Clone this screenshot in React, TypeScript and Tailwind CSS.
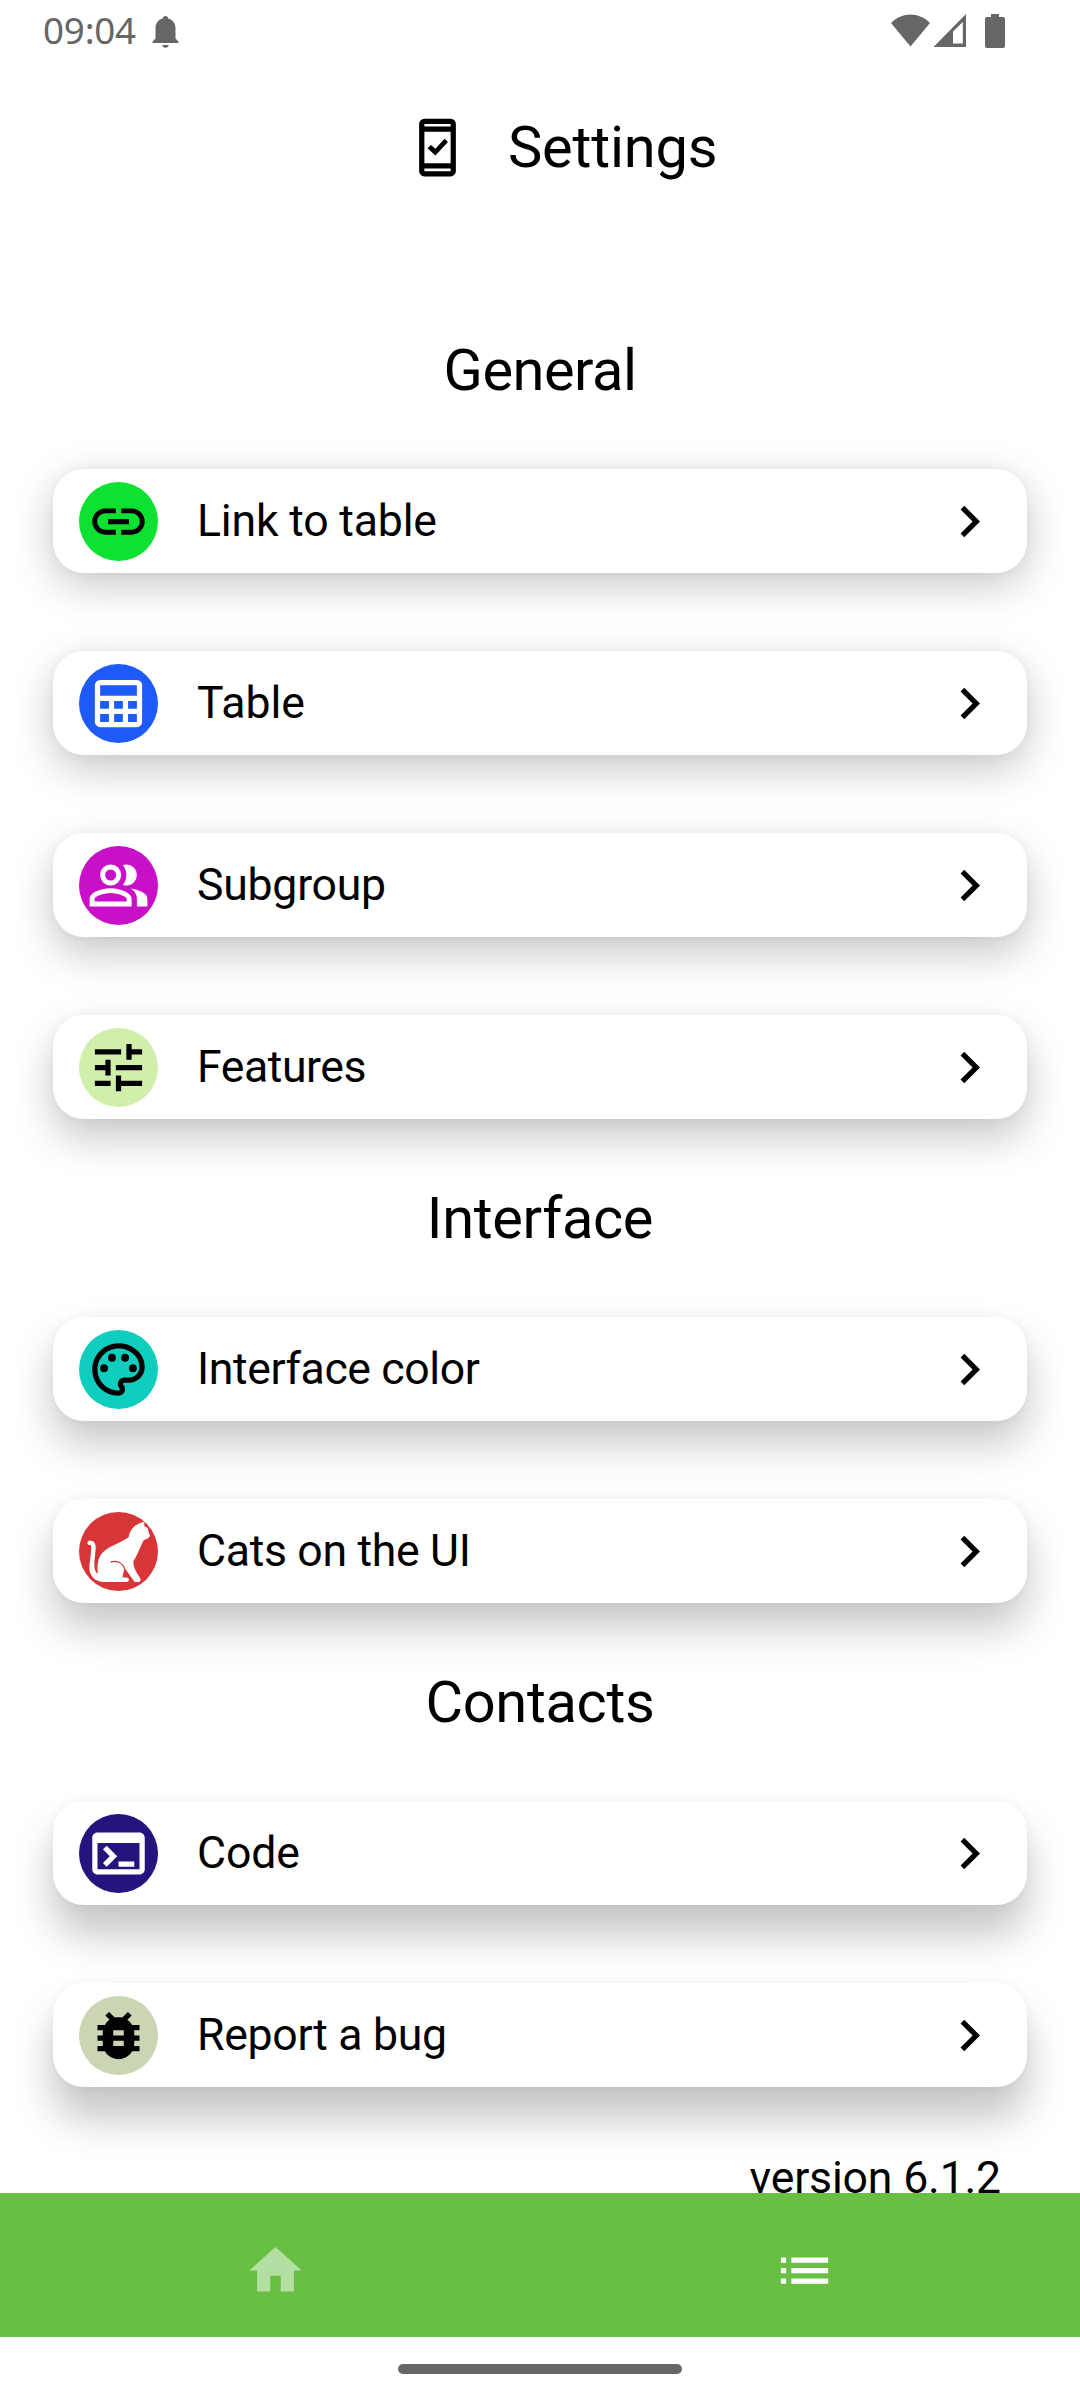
import React from "react";

type IconDef = { paths: string[]; evenOdd?: boolean };

const icons: Record<string, IconDef> = {
  link: {
    paths: [
      "M3.9 12c0-1.71 1.39-3.1 3.1-3.1h4V7H7c-2.76 0-5 2.24-5 5s2.24 5 5 5h4v-1.9H7c-1.71 0-3.1-1.39-3.1-3.1zM8 13h8v-2H8v2zm9-6h-4v1.9h4c1.71 0 3.1 1.39 3.1 3.1s-1.39 3.1-3.1 3.1h-4V17h4c2.76 0 5-2.24 5-5s-2.24-5-5-5z",
    ],
  },
  table: {
    evenOdd: true,
    paths: [
      "M5 3h14a2 2 0 0 1 2 2v14a2 2 0 0 1-2 2H5a2 2 0 0 1-2-2V5a2 2 0 0 1 2-2zM5 5v4h14V5zM5 11v3h3.35v-3zM10.33 11v3h3.34v-3zM15.65 11v3H19v-3zM5 16v3h3.35v-3zM10.33 16v3h3.34v-3zM15.65 16v3H19v-3z",
    ],
  },
  people: {
    evenOdd: true,
    paths: [
      "M9 13c2.67 0 8 1.34 8 4v3H1v-3c0-2.66 5.33-4 8-4zM9 14.9c-2.97 0-6.1 1.46-6.1 2.1v1.1h12.2V17c0-.64-3.13-2.1-6.1-2.1z",
      "M9 4a4 4 0 1 1 0 8a4 4 0 0 1 0-8zM9 5.9a2.1 2.1 0 1 0 0 4.2a2.1 2.1 0 0 0 0-4.2z",
      "M15 4a4 4 0 0 1 0 8c-.47 0-.92-.08-1.33-.23C14.5 10.74 15 9.43 15 8s-.5-2.74-1.33-3.77C14.08 4.08 14.53 4 15 4z",
      "M16.67 13.13C18.04 14.06 19 15.32 19 17v3h4v-3c0-2.18-3.57-3.47-6.33-3.87z",
    ],
  },
  tune: {
    paths: [
      "M3 17v2h6v-2H3zM3 5v2h10V5H3zm10 16v-2h8v-2h-8v-2h-2v6h2zM7 9v2H3v2h4v2h2V9H7zm14 4v-2H11v2h10zm-6-4h2V7h4V5h-4V3h-2v6z",
    ],
  },
  palette: {
    paths: [
      "M12 22C6.49 22 2 17.51 2 12S6.49 2 12 2s10 4.04 10 9c0 3.31-2.69 6-6 6h-1.77c-.28 0-.5.22-.5.5 0 .12.05.23.13.33.41.47.64 1.06.64 1.67A2.5 2.5 0 0 1 12 22zm0-18c-4.41 0-8 3.59-8 8s3.59 8 8 8c.28 0 .5-.22.5-.5a.54.54 0 0 0-.14-.35c-.41-.46-.63-1.05-.63-1.65a2.5 2.5 0 0 1 2.5-2.5H16c2.21 0 4-1.79 4-4 0-3.86-3.59-7-8-7z",
      "M5 11.5a1.5 1.5 0 1 1 3 0a1.5 1.5 0 1 1-3 0zM8 7.5a1.5 1.5 0 1 1 3 0a1.5 1.5 0 1 1-3 0zM13 7.5a1.5 1.5 0 1 1 3 0a1.5 1.5 0 1 1-3 0zM16 11.5a1.5 1.5 0 1 1 3 0a1.5 1.5 0 1 1-3 0z",
    ],
  },
  terminal: {
    paths: [
      "M20 4H4c-1.11 0-2 .9-2 2v12c0 1.1.89 2 2 2h16c1.1 0 2-.9 2-2V6c0-1.1-.89-2-2-2zm0 14H4V8h16v10zm-2-1h-6v-2h6v2zM7.5 17l-1.41-1.41L8.67 13l-2.59-2.59L7.5 9l4 4-4 4z",
    ],
  },
  bug: {
    paths: [
      "M20 8h-2.81a5.985 5.985 0 0 0-1.82-1.96L17 4.41 15.59 3l-2.17 2.17C12.96 5.06 12.49 5 12 5s-.96.06-1.41.17L8.41 3 7 4.41l1.62 1.63C7.88 6.55 7.26 7.22 6.81 8H4v2h2.09c-.05.33-.09.66-.09 1v1H4v2h2v1c0 .34.04.67.09 1H4v2h2.81c1.04 1.79 2.97 3 5.19 3s4.15-1.21 5.19-3H20v-2h-2.09c.05-.33.09-.66.09-1v-1h2v-2h-2v-1c0-.34-.04-.67-.09-1H20V8zm-6 8h-4v-2h4v2zm0-4h-4v-2h4v2z",
    ],
  },
  phone: {
    evenOdd: true,
    paths: [
      "M7 1h10a2 2 0 0 1 2 2v18a2 2 0 0 1-2 2H7a2 2 0 0 1-2-2V3a2 2 0 0 1 2-2zM7 3v1h10V3zM7 6v12h10V6zM7 20v1h10v-1z",
      "M8.2 12.3l1.3-1.3 1.7 1.5 3.5-3.85 1.3 1.3-4.8 5.05z",
    ],
  },
  chevron: { paths: ["M10 6 8.59 7.41 13.17 12l-4.58 4.59L10 18l6-6z"] },
  home: { paths: ["M10 20v-6h4v6h5v-8h3L12 3 2 12h3v8z"] },
  list: { paths: ["M3 13h2v-2H3v2zm0 4h2v-2H3v2zm0-8h2V7H3v2zm4 4h14v-2H7v2zm0 4h14v-2H7v2zM7 7v2h14V7H7z"] },
};

function Icon({ name, className = "" }: { name: string; className?: string }) {
  const icon = icons[name];
  return (
    <svg viewBox="0 0 24 24" fill="currentColor" className={`size-[63px] shrink-0 ${className}`}>
      {icon.paths.map((d) => (
        <path key={d} d={d} fillRule={icon.evenOdd ? "evenodd" : "nonzero"} />
      ))}
    </svg>
  );
}

function CatIcon() {
  return (
    <svg viewBox="0 0 237 237" className="size-[79px] shrink-0">
      <path
        fill="#fff"
        d="M196 29L196 43L206 48L209 61L213 72L207 79L194 85C184 104 175 131 163 148C163 168 174 183 183 198C187 204 183 210 177 210L167 210L137 168C133 175 134 185 130 196L145 197C152 199 151 209 144 210L74 210C49 208 32 194 31 167C32 145 38 119 36 100L27 98C22 92 28 84 36 86C47 87 51 98 50 109C49 130 44 153 47 169C48 177 52 183 56 186C54 153 57 132 77 116C96 101 128 91 149 76C153 50 170 35 196 29Z"
      />
      <path d="M95 150C118 144 132 155 137 170" fill="none" stroke="#d83538" strokeWidth="4" />
    </svg>
  );
}

type RowProps = { label: string; tracking: string; icon: string; badge: string; shadow: string };

function Row({ label, tracking, icon, badge, shadow }: RowProps) {
  return (
    <div className={`flex h-[104px] items-center rounded-[31px] bg-white px-[26px] pt-px ${shadow}`}>
      <div className={`flex size-[79px] shrink-0 items-center justify-center overflow-hidden rounded-full ${badge}`}>
        {icon === "cat" ? <CatIcon /> : <Icon name={icon} />}
      </div>
      <span className={`-mt-px ml-[39px] grow text-[44.6px] leading-[52px] ${tracking}`}>{label}</span>
      <Icon name="chevron" />
    </div>
  );
}

const sections: { title: string; tracking: string; rows: RowProps[] }[] = [
  {
    title: "General",
    tracking: "tracking-[-0.5px]",
    rows: [
      { label: "Link to table", tracking: "tracking-[-0.18px]", icon: "link", badge: "bg-[#0de232] text-black", shadow: "shadow-[0_12px_42px_rgba(0,0,0,0.22),0_0_12px_rgba(0,0,0,0.04)]" },
      { label: "Table", tracking: "tracking-normal", icon: "table", badge: "bg-[#1e5af8] text-white", shadow: "shadow-[0_14px_42px_rgba(0,0,0,0.22),0_0_12px_rgba(0,0,0,0.04)]" },
      { label: "Subgroup", tracking: "tracking-[-0.25px]", icon: "people", badge: "bg-[#c910c9] text-white", shadow: "shadow-[0_17px_42px_rgba(0,0,0,0.22),0_0_12px_rgba(0,0,0,0.04)]" },
      { label: "Features", tracking: "tracking-[-0.45px]", icon: "tune", badge: "bg-[#cfefaa] text-black", shadow: "shadow-[0_19px_42px_rgba(0,0,0,0.22),0_0_12px_rgba(0,0,0,0.04)]" },
    ],
  },
  {
    title: "Interface",
    tracking: "tracking-[-0.35px]",
    rows: [
      { label: "Interface color", tracking: "tracking-[-0.4px]", icon: "palette", badge: "bg-[#10cebd] text-black", shadow: "shadow-[0_23px_42px_rgba(0,0,0,0.22),0_0_12px_rgba(0,0,0,0.04)]" },
      { label: "Cats on the UI", tracking: "tracking-[-0.32px]", icon: "cat", badge: "bg-[#d83538] text-white", shadow: "shadow-[0_25px_42px_rgba(0,0,0,0.22),0_0_12px_rgba(0,0,0,0.04)]" },
    ],
  },
  {
    title: "Contacts",
    tracking: "tracking-[-0.3px]",
    rows: [
      { label: "Code", tracking: "tracking-[-0.15px]", icon: "terminal", badge: "bg-[#25147e] text-white", shadow: "shadow-[0_29px_42px_rgba(0,0,0,0.23),0_0_12px_rgba(0,0,0,0.04)]" },
      { label: "Report a bug", tracking: "tracking-[-0.3px]", icon: "bug", badge: "bg-[#cad5b3] text-black", shadow: "shadow-[0_31px_42px_rgba(0,0,0,0.23),0_0_12px_rgba(0,0,0,0.04)]" },
    ],
  },
];

function StatusBar() {
  return (
    <header className="flex h-[63px] items-start justify-between pr-[73px] pl-[43px] text-[#666]">
      <div className="flex items-start">
        <span className="mt-[5px] w-[94px] font-['Noto_Sans',sans-serif] text-[36.75px] leading-[50px] tracking-[-0.2px]">
          09:04
        </span>
        <svg viewBox="0 0 27 32" fill="currentColor" className="mt-4 ml-[15px] h-8 w-[27px]">
          <path d="M13.5 0c1.6 0 2.6 1 2.7 2.4 4.6 1.2 7.3 4.9 7.3 9.8v10.3l3 3V27H.5v-1.5l3-3V12.200c0-4.900 2.700-8.600 7.300-9.800C10.900 1 11.900 0 13.500 0zM10.300 29h6.400c-.2 1.800-1.400 2.800-3.200 2.800s-3-1-3.200-2.800z" />
        </svg>
      </div>
      <svg viewBox="0 0 116 36" fill="currentColor" className="mt-[13px] h-9 w-[116px]">
        <path d="M0 10C11-1.500 28-1.500 39 10L19.500 33.500z" />
        <path fillRule="evenodd" d="M75 1v33H42.500zM71.800 9L62 18.500v12h9.800z" />
        <path d="M100 1h8v3h4a2 2 0 0 1 2 2v27a2 2 0 0 1-2 2H96a2 2 0 0 1-2-2V6a2 2 0 0 1 2-2h4z" />
      </svg>
    </header>
  );
}

export default function App() {
  return (
    <div className="flex h-[2400px] w-[1080px] flex-col overflow-hidden bg-white font-[Roboto,sans-serif] text-black">
      <StatusBar />
      <main className="min-h-0 grow overflow-hidden">
        <div className="flex h-[168px] items-center pt-px pl-[406px]">
          <Icon name="phone" />
          <h1 className="ml-[39px] text-[57.75px] leading-[68px] tracking-[-0.2px]">Settings</h1>
        </div>
        {sections.map((section, i) => (
          <section key={section.title} className={i === 0 ? "mt-[105px]" : "mt-[65px]"}>
            <h2 className={`text-center text-[57.75px] leading-[68px] ${section.tracking}`}>{section.title}</h2>
            <div className="mx-[53px] mt-[65px] flex flex-col gap-[78px]">
              {section.rows.map((row) => (
                <Row key={row.label} {...row} />
              ))}
            </div>
          </section>
        ))}
        <p className="mt-[65px] pr-[79px] text-right text-[44.6px] leading-[52px] tracking-[-0.18px]">version 6.1.2</p>
      </main>
      <nav className="flex h-[144px] shrink-0 items-center bg-[#68bf44] px-3 pt-[10px] text-white">
        <div className="flex flex-1 justify-center pr-px">
          <Icon name="home" className="opacity-50" />
        </div>
        <div className="flex flex-1 justify-center">
          <Icon name="list" />
        </div>
      </nav>
      <footer className="flex h-[63px] shrink-0 items-center justify-center">
        <div className="h-[10px] w-[284px] rounded-full bg-[#666]" />
      </footer>
    </div>
  );
}
